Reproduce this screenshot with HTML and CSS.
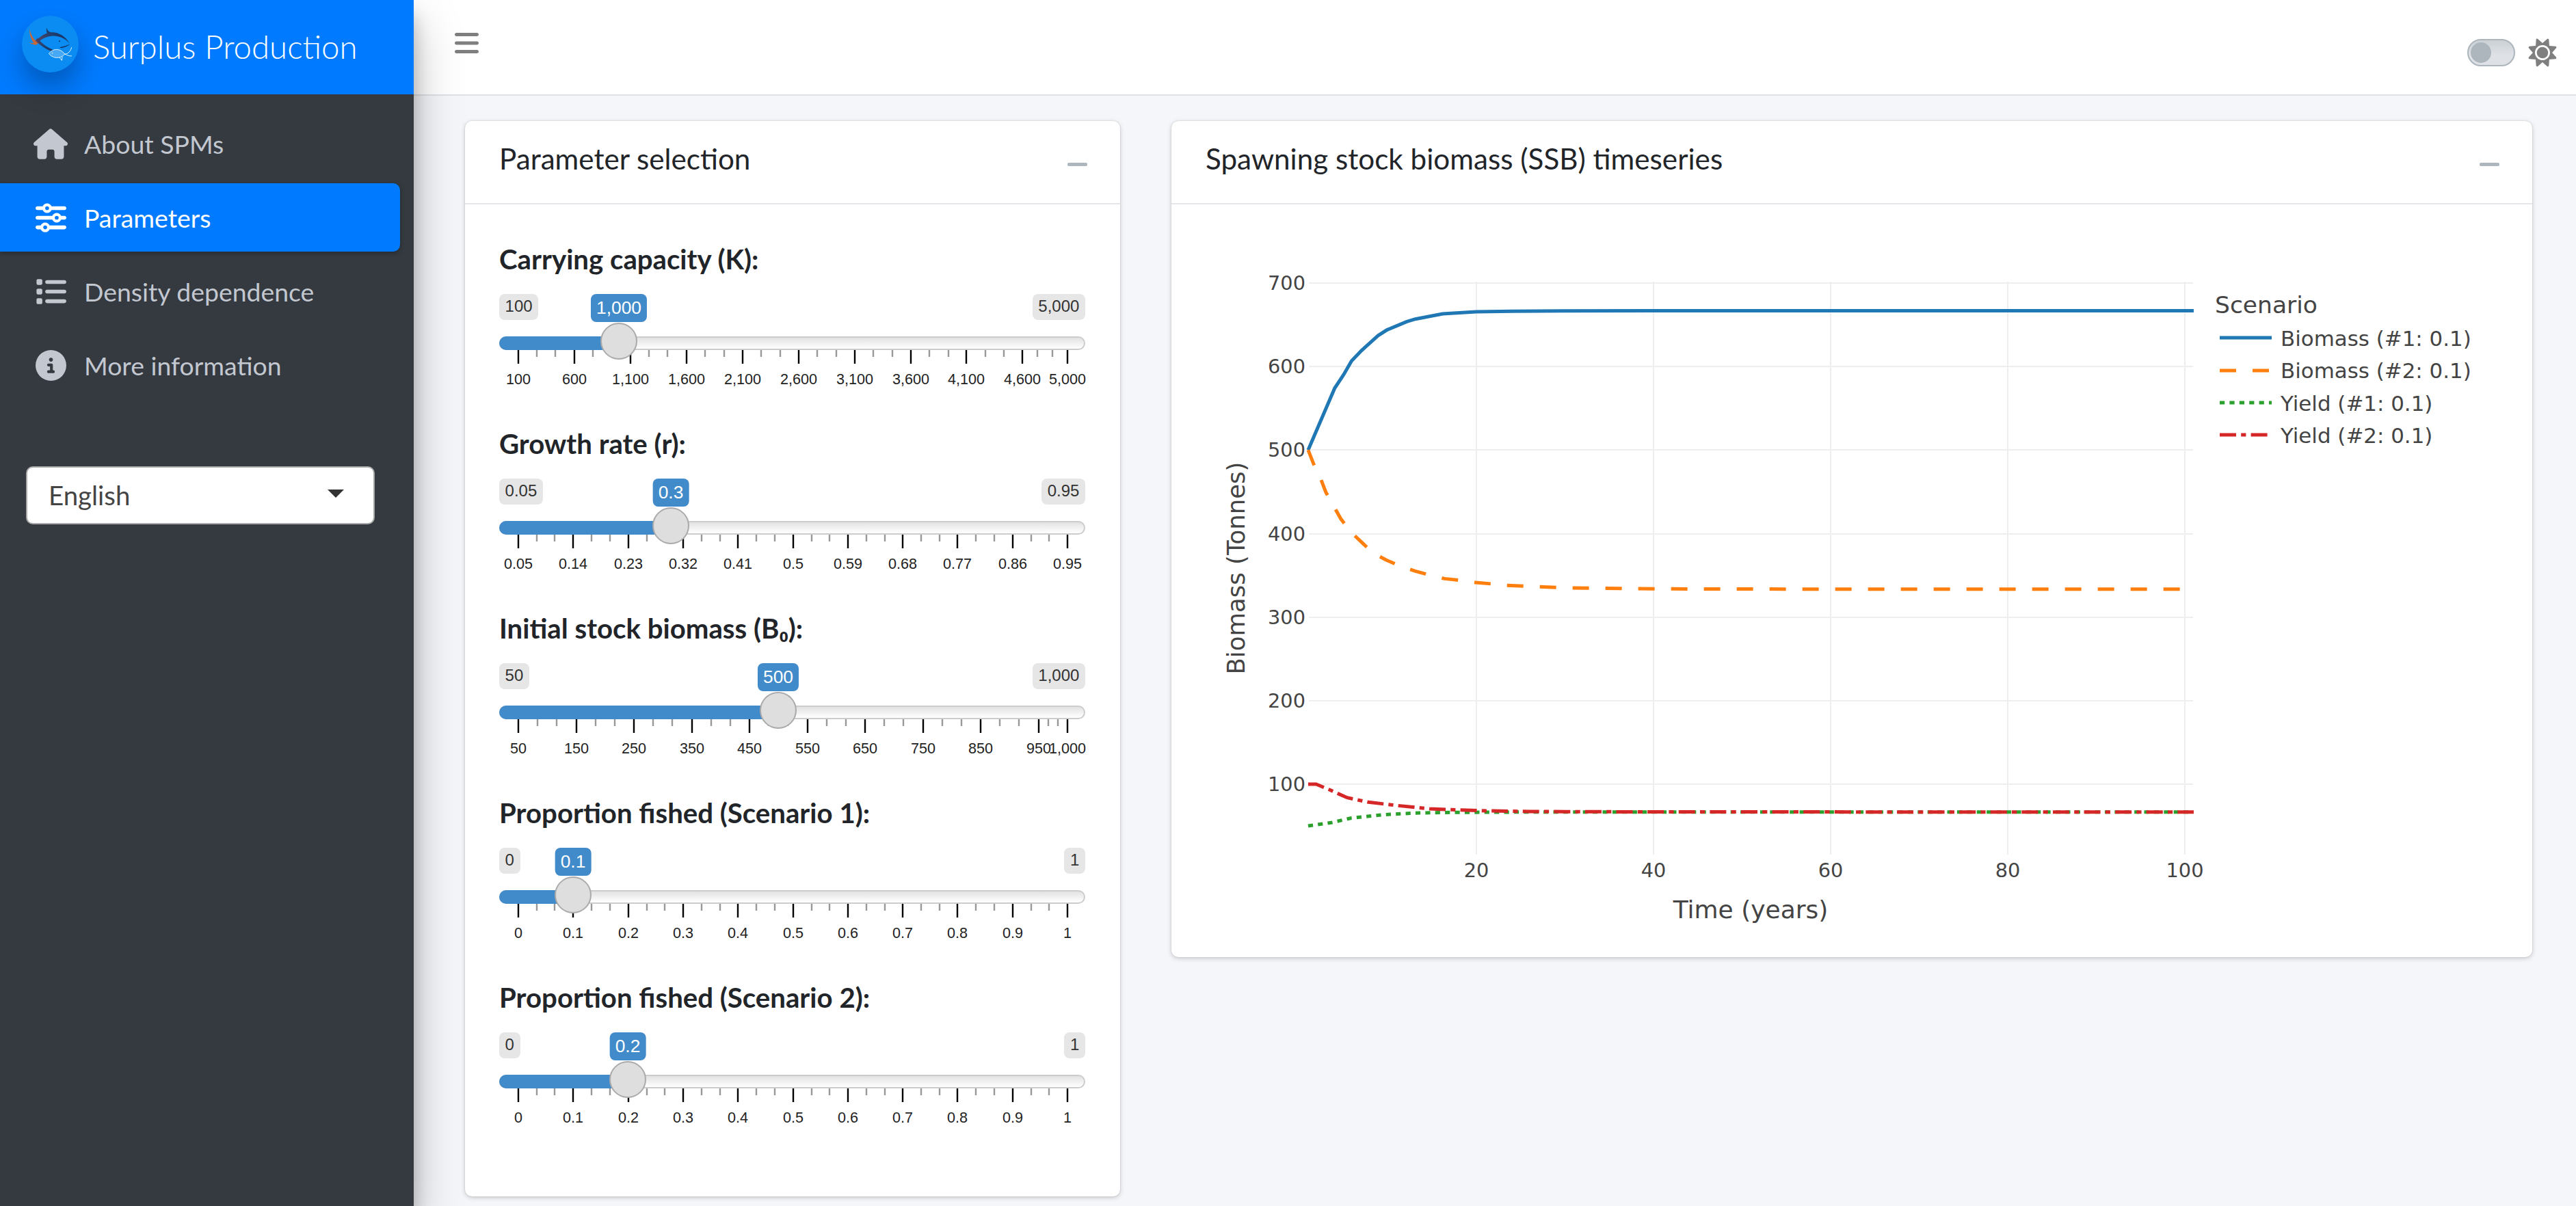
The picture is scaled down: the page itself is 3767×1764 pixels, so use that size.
FILE: index.html
```html
<!DOCTYPE html>
<html lang="en">
<head>
<meta charset="utf-8">
<title>Surplus Production</title>
<link rel="stylesheet" href="styles.css">
</head>
<body>
<div class="app">
  <aside class="sidebar">
    <div class="brand">
      <svg class="logo" viewBox="96 66 250 250">
        <defs>
          <linearGradient id="fishBody" x1="0" y1="0" x2="1" y2="0"><stop offset="0" stop-color="#5a4560"/><stop offset=".5" stop-color="#1f3f70"/><stop offset="1" stop-color="#16305c"/></linearGradient>
        </defs>
        <circle cx="221" cy="191" r="125" fill="#0a8cf2"/>
        <path fill="url(#fishBody)" d="M148 190C175 150 215 135 240 140C270 145 295 165 307 192C295 170 265 155 235 155C205 155 180 170 160 190Z"/>
        <path fill="url(#fishBody)" d="M165 165C185 190 205 205 235 217L225 222C200 212 175 195 155 175Z"/>
        <path fill="#16305c" d="M307 192C300 200 285 205 270 208L262 205C280 202 295 198 307 192Z"/>
        <path fill="#1f3f70" d="M205 118C208 130 215 138 228 140L208 146C203 135 203 125 205 118Z"/>
        <path fill="#c4693c" d="M130 124C135 150 148 170 168 188L155 195C138 175 128 150 130 124Z"/>
        <path fill="#c4693c" d="M126 182C140 188 150 188 165 183L160 195C148 193 135 190 126 182Z"/>
        <circle cx="262" cy="178" r="3" fill="#16305c"/>
        <path fill="#fff" fill-opacity=".25" stroke="#e8f4ff" stroke-width="3" d="M215 233C230 212 262 205 285 235C270 255 235 258 215 233Z"/>
        <path fill="none" stroke="#e8f4ff" stroke-width="3" d="M315 205C312 220 300 235 285 235C298 240 305 245 316 243M262 250L272 263L274 248"/>
        <circle cx="230" cy="231" r="2.5" fill="#e8f4ff"/>
      </svg>
      <span class="brand-text">Surplus Production</span>
    </div>
    <nav class="nav">
      <a class="nav-item">
        <span class="nav-icon"><svg class="icon-home" viewBox="0 0 576 512"><path d="M575.8 255.5c0 18-15 32.1-32 32.1h-32l.7 160.2c0 2.7-.2 5.4-.5 8.1V472c0 22.1-17.9 40-40 40H456c-1.1 0-2.2 0-3.3-.1c-1.4 .1-2.8 .1-4.2 .1H416 392c-22.1 0-40-17.9-40-40V448 384c0-17.7-14.3-32-32-32H256c-17.7 0-32 14.3-32 32v64 24c0 22.1-17.9 40-40 40H160 128.1c-1.5 0-3-.1-4.5-.2c-1.2 .1-2.4 .2-3.6 .2H104c-22.1 0-40-17.9-40-40V360c0-.9 0-1.9 .1-2.8V287.6H32c-18 0-32-14-32-32.1c0-9 3-17 10-24L266.4 8c7-7 15-8 22-8s15 2 21 7L564.8 231.5c8 7 12 15 11 24z"/></svg></span>
        <span>About SPMs</span>
      </a>
      <a class="nav-item is-active">
        <span class="nav-icon"><svg class="icon-std" viewBox="0 0 512 512"><path d="M0 416c0 17.7 14.3 32 32 32l54.7 0c12.3 28.3 40.5 48 73.3 48s61-19.7 73.3-48L480 448c17.7 0 32-14.3 32-32s-14.3-32-32-32l-246.7 0c-12.3-28.3-40.5-48-73.3-48s-61 19.7-73.3 48L32 384c-17.7 0-32 14.3-32 32zm128 0a32 32 0 1 1 64 0 32 32 0 1 1 -64 0zM320 256a32 32 0 1 1 64 0 32 32 0 1 1 -64 0zm32-80c-32.8 0-61 19.7-73.3 48L32 224c-17.7 0-32 14.3-32 32s14.3 32 32 32l246.7 0c12.3 28.3 40.5 48 73.3 48s61-19.7 73.3-48l54.7 0c17.7 0 32-14.3 32-32s-14.3-32-32-32l-54.7 0c-12.3-28.3-40.5-48-73.3-48zM192 128a32 32 0 1 1 0-64 32 32 0 1 1 0 64zm73.3-64C253 35.7 224.8 16 192 16s-61 19.7-73.3 48L32 64C14.3 64 0 78.3 0 96s14.3 32 32 32l86.7 0c12.3 28.3 40.5 48 73.3 48s61-19.7 73.3-48L480 128c17.7 0 32-14.3 32-32s-14.3-32-32-32L265.3 64z"/></svg></span>
        <span>Parameters</span>
      </a>
      <a class="nav-item">
        <span class="nav-icon"><svg class="icon-std" viewBox="0 0 512 512"><path d="M40 48C26.7 48 16 58.7 16 72v48c0 13.3 10.7 24 24 24H88c13.3 0 24-10.7 24-24V72c0-13.3-10.7-24-24-24H40zM192 64c-17.7 0-32 14.3-32 32s14.3 32 32 32H480c17.7 0 32-14.3 32-32s-14.3-32-32-32H192zm0 160c-17.7 0-32 14.3-32 32s14.3 32 32 32H480c17.7 0 32-14.3 32-32s-14.3-32-32-32H192zm0 160c-17.7 0-32 14.3-32 32s14.3 32 32 32H480c17.7 0 32-14.3 32-32s-14.3-32-32-32H192zM16 232v48c0 13.3 10.7 24 24 24H88c13.3 0 24-10.7 24-24V232c0-13.3-10.7-24-24-24H40c-13.3 0-24 10.7-24 24zM40 368c-13.3 0-24 10.7-24 24v48c0 13.3 10.7 24 24 24H88c13.3 0 24-10.7 24-24V392c0-13.3-10.7-24-24-24H40z"/></svg></span>
        <span>Density dependence</span>
      </a>
      <a class="nav-item">
        <span class="nav-icon"><svg class="icon-std" viewBox="0 0 512 512"><path d="M256 512A256 256 0 1 0 256 0a256 256 0 1 0 0 512zM216 336h24V272H216c-13.3 0-24-10.7-24-24s10.7-24 24-24h48c13.3 0 24 10.7 24 24v88h8c13.3 0 24 10.7 24 24s-10.7 24-24 24H216c-13.3 0-24-10.7-24-24s10.7-24 24-24zm40-208a32 32 0 1 1 0 64 32 32 0 1 1 0-64z"/></svg></span>
        <span>More information</span>
      </a>
    </nav>
    <div class="lang-select"><span>English</span><span class="caret"></span></div>
  </aside>

  <div class="main">
    <header class="topbar">
      <svg class="hamburger" viewBox="0 0 448 512"><path d="M0 96C0 78.3 14.3 64 32 64H416c17.7 0 32 14.3 32 32s-14.3 32-32 32H32C14.3 128 0 113.7 0 96zM0 256c0-17.7 14.3-32 32-32H416c17.7 0 32 14.3 32 32s-14.3 32-32 32H32c-17.7 0-32-14.3-32-32zM448 416c0 17.7-14.3 32-32 32H32c-17.7 0-32-14.3-32-32s14.3-32 32-32H416c17.7 0 32 14.3 32 32z"/></svg>
      <div class="top-tools">
        <span class="toggle"><span class="toggle-knob"></span></span>
        <svg class="sun" viewBox="0 0 512 512"><path d="M256 160c-52.9 0-96 43.1-96 96s43.1 96 96 96 96-43.1 96-96-43.1-96-96-96zm246.4 80.5l-94.7-47.3 33.5-100.4c4.5-13.6-8.4-26.5-21.9-21.9l-100.4 33.5-47.4-94.8c-6.4-12.8-24.6-12.8-31 0l-47.3 94.7L92.7 70.8c-13.6-4.5-26.5 8.4-21.9 21.9l33.5 100.4-94.7 47.4c-12.8 6.4-12.8 24.6 0 31l94.7 47.3-33.5 100.5c-4.5 13.6 8.4 26.5 21.9 21.9l100.4-33.5 47.3 94.7c6.4 12.8 24.6 12.8 31 0l47.3-94.7 100.4 33.5c13.6 4.5 26.5-8.4 21.9-21.9l-33.5-100.4 94.7-47.3c13-6.5 13-24.7.2-31.1zm-155.9 106c-49.9 49.9-131.1 49.9-181 0-49.9-49.9-49.9-131.1 0-181 49.9-49.9 131.1-49.9 181 0 49.9 49.9 49.9 131.1 0 181z"/></svg>
      </div>
    </header>

    <main class="content">
      <section class="card card-params">
        <div class="card-header"><h3 class="card-title">Parameter selection</h3><span class="minus"></span></div>
        <div class="card-body">

          <div class="field">
            <label class="field-label">Carrying capacity (K):</label>
            <div class="slider" style="--x:175px">
              <span class="pill pill-min">100</span><span class="pill pill-max">5,000</span>
              <span class="track"></span><span class="fill"></span>
              <svg class="ticks" viewBox="0 0 857 20"><path class="tick-minor" d="M55 0v10M82 0v10M137 0v10M164 0v10M219 0v10M246 0v10M301 0v10M329 0v10M383 0v10M411 0v10M465 0v10M493 0v10M547 0v10M575 0v10M629 0v10M657 0v10M711 0v10M738 0v10M787 0v10M809 0v10"/><path class="tick-major" d="M28 0v20M110 0v20M192 0v20M274 0v20M356 0v20M438 0v20M520 0v20M602 0v20M683 0v20M765 0v20M831 0v20"/></svg>
              <span class="handle"></span><span class="pill pill-from">1,000</span>
              <div class="grid-labels"><span style="left:28px">100</span><span style="left:110px">600</span><span style="left:192px">1,100</span><span style="left:274px">1,600</span><span style="left:356px">2,100</span><span style="left:438px">2,600</span><span style="left:520px">3,100</span><span style="left:602px">3,600</span><span style="left:683px">4,100</span><span style="left:765px">4,600</span><span style="left:831px">5,000</span></div>
            </div>
          </div>

          <div class="field">
            <label class="field-label">Growth rate (r):</label>
            <div class="slider" style="--x:251px">
              <span class="pill pill-min">0.05</span><span class="pill pill-max">0.95</span>
              <span class="track"></span><span class="fill"></span>
              <svg class="ticks" viewBox="0 0 857 20"><path class="tick-minor" d="M55 0v10M81 0v10M135 0v10M162 0v10M216 0v10M242 0v10M296 0v10M323 0v10M376 0v10M403 0v10M457 0v10M483 0v10M537 0v10M564 0v10M617 0v10M644 0v10M697 0v10M724 0v10M778 0v10M804 0v10"/><path class="tick-major" d="M28 0v20M108 0v20M189 0v20M269 0v20M349 0v20M430 0v20M510 0v20M590 0v20M670 0v20M751 0v20M831 0v20"/></svg>
              <span class="handle"></span><span class="pill pill-from">0.3</span>
              <div class="grid-labels"><span style="left:28px">0.05</span><span style="left:108px">0.14</span><span style="left:189px">0.23</span><span style="left:269px">0.32</span><span style="left:349px">0.41</span><span style="left:430px">0.5</span><span style="left:510px">0.59</span><span style="left:590px">0.68</span><span style="left:670px">0.77</span><span style="left:751px">0.86</span><span style="left:831px">0.95</span></div>
            </div>
          </div>

          <div class="field">
            <label class="field-label">Initial stock biomass (B₀):</label>
            <div class="slider" style="--x:408px">
              <span class="pill pill-min">50</span><span class="pill pill-max">1,000</span>
              <span class="track"></span><span class="fill"></span>
              <svg class="ticks" viewBox="0 0 857 20"><path class="tick-minor" d="M56 0v10M84 0v10M141 0v10M169 0v10M225 0v10M253 0v10M310 0v10M338 0v10M394 0v10M422 0v10M479 0v10M507 0v10M563 0v10M591 0v10M648 0v10M676 0v10M732 0v10M760 0v10M803 0v10M817 0v10"/><path class="tick-major" d="M28 0v20M113 0v20M197 0v20M282 0v20M366 0v20M451 0v20M535 0v20M620 0v20M704 0v20M789 0v20M831 0v20"/></svg>
              <span class="handle"></span><span class="pill pill-from">500</span>
              <div class="grid-labels"><span style="left:28px">50</span><span style="left:113px">150</span><span style="left:197px">250</span><span style="left:282px">350</span><span style="left:366px">450</span><span style="left:451px">550</span><span style="left:535px">650</span><span style="left:620px">750</span><span style="left:704px">850</span><span style="left:789px">950</span><span style="left:831px">1,000</span></div>
            </div>
          </div>

          <div class="field">
            <label class="field-label">Proportion fished (Scenario 1):</label>
            <div class="slider" style="--x:108px">
              <span class="pill pill-min">0</span><span class="pill pill-max">1</span>
              <span class="track"></span><span class="fill"></span>
              <svg class="ticks" viewBox="0 0 857 20"><path class="tick-minor" d="M55 0v10M81 0v10M135 0v10M162 0v10M216 0v10M242 0v10M296 0v10M323 0v10M376 0v10M403 0v10M457 0v10M483 0v10M537 0v10M564 0v10M617 0v10M644 0v10M697 0v10M724 0v10M778 0v10M804 0v10"/><path class="tick-major" d="M28 0v20M108 0v20M189 0v20M269 0v20M349 0v20M430 0v20M510 0v20M590 0v20M670 0v20M751 0v20M831 0v20"/></svg>
              <span class="handle"></span><span class="pill pill-from">0.1</span>
              <div class="grid-labels"><span style="left:28px">0</span><span style="left:108px">0.1</span><span style="left:189px">0.2</span><span style="left:269px">0.3</span><span style="left:349px">0.4</span><span style="left:430px">0.5</span><span style="left:510px">0.6</span><span style="left:590px">0.7</span><span style="left:670px">0.8</span><span style="left:751px">0.9</span><span style="left:831px">1</span></div>
            </div>
          </div>

          <div class="field">
            <label class="field-label">Proportion fished (Scenario 2):</label>
            <div class="slider" style="--x:188px">
              <span class="pill pill-min">0</span><span class="pill pill-max">1</span>
              <span class="track"></span><span class="fill"></span>
              <svg class="ticks" viewBox="0 0 857 20"><path class="tick-minor" d="M55 0v10M81 0v10M135 0v10M162 0v10M216 0v10M242 0v10M296 0v10M323 0v10M376 0v10M403 0v10M457 0v10M483 0v10M537 0v10M564 0v10M617 0v10M644 0v10M697 0v10M724 0v10M778 0v10M804 0v10"/><path class="tick-major" d="M28 0v20M108 0v20M189 0v20M269 0v20M349 0v20M430 0v20M510 0v20M590 0v20M670 0v20M751 0v20M831 0v20"/></svg>
              <span class="handle"></span><span class="pill pill-from">0.2</span>
              <div class="grid-labels"><span style="left:28px">0</span><span style="left:108px">0.1</span><span style="left:189px">0.2</span><span style="left:269px">0.3</span><span style="left:349px">0.4</span><span style="left:430px">0.5</span><span style="left:510px">0.6</span><span style="left:590px">0.7</span><span style="left:670px">0.8</span><span style="left:751px">0.9</span><span style="left:831px">1</span></div>
            </div>
          </div>

        </div>
      </section>

      <section class="card card-chart">
        <div class="card-header"><h3 class="card-title">Spawning stock biomass (SSB) timeseries</h3><span class="minus"></span></div>
        <svg class="chart" viewBox="1713 299 1990 1099">
          <g class="grid">
            <path d="M1914 414H3207M1914 536H3207M1914 658H3207M1914 781H3207M1914 903H3207M1914 1025H3207M1914 1147H3207"/>
            <path d="M2159 412V1250M2418 412V1250M2677 412V1250M2936 412V1250M3195 412V1250"/>
          </g>
          <g transform="matrix(12.95 0 0 -1.222 1900 1269.2)">
            <polyline class="line line-blue" points="1,500 4,574 5,590 5.9,606.6 7,618.8 8.9,637 9.9,643.7 12.1,653.5 13.1,656.7 16.2,663 20,665.4 24,666 30,666.5 40,666.65 60,666.67 101,666.67"/>
            <polyline class="line line-orange" points="1,500 1.6,483.7 2.4,466 3,449.5 3.9,432.5 4.7,417.5 5.8,402 7,390 8.3,377 9.8,368.4 11.4,361 13.1,355 14.8,350 16.4,346 18.2,343.9 19.9,341.4 21.7,339.8 23.2,338 30,335 40,333.8 60,333.4 101,333.33"/>
            <polyline class="line line-green" points="1,50 3.6,53.9 5.8,59.3 9.4,63.4 12.9,65.4 17.3,66.2 25,66.6 40,66.67 101,66.67"/>
            <polyline class="line line-red" points="1,100 1.9,100 3.4,93.4 5.4,83.9 7.8,78.5 11.1,74.4 14.7,70.5 18.2,69.2 21.7,68 26,67.3 40,66.8 101,66.67"/>
          </g>
          <g class="axis-ticks axis-y">
            <text x="1909" y="424">700</text><text x="1909" y="546">600</text><text x="1909" y="668">500</text><text x="1909" y="791">400</text><text x="1909" y="913">300</text><text x="1909" y="1035">200</text><text x="1909" y="1157">100</text>
          </g>
          <g class="axis-ticks axis-x">
            <text x="2159" y="1283">20</text><text x="2418" y="1283">40</text><text x="2677" y="1283">60</text><text x="2936" y="1283">80</text><text x="3195" y="1283">100</text>
          </g>
          <text class="axis-title axis-title-x" x="2560" y="1343">Time (years)</text>
          <text class="axis-title" transform="translate(1820 831) rotate(-90)">Biomass (Tonnes)</text>
          <text class="legend-title" x="3239" y="458">Scenario</text>
          <g class="legend">
            <path class="line line-blue" d="M3246 494H3322"/>
            <path class="line line-orange" d="M3246 542H3322"/>
            <path class="line line-green" d="M3246 589H3322"/>
            <path class="line line-red" d="M3246 636H3322"/>
            <text x="3335" y="506">Biomass (#1: 0.1)</text>
            <text x="3335" y="553">Biomass (#2: 0.1)</text>
            <text x="3335" y="601">Yield (#1: 0.1)</text>
            <text x="3335" y="648">Yield (#2: 0.1)</text>
          </g>
        </svg>
      </section>
    </main>
  </div>
</div>
</body>
</html>
```
FILE: styles.css
```css
* { box-sizing: border-box; }
html, body { margin: 0; height: 100%; }
body {
  font-family: "Lato", "Noto Sans", sans-serif;
  font-size: 38.4px;
  color: #212529;
  background: #f4f6f9;
  overflow: hidden;
}
.app { display: flex; height: 1764px; }

/* Sidebar */
.sidebar {
  width: 605px;
  flex: none;
  background: #343a40;
  position: relative;
  z-index: 2;
  box-shadow: 0 34px 67px rgba(0,0,0,.25), 0 24px 24px rgba(0,0,0,.22);
}
.brand {
  height: 138px;
  background: #007bff;
  display: flex;
  align-items: center;
  padding-left: 32px;
  gap: 21px;
}
.logo {
  width: 83px;
  height: 83px;
  border-radius: 50%;
  margin-top: -10px;
  box-shadow: 0 22px 40px rgba(0,0,0,.28);
  flex: none;
}
.brand-text { font-size: 47.4px; font-weight: 300; color: #fff; margin-top: -4px; white-space: nowrap; }
.nav { padding-top: 22px; width: 585px; display: flex; flex-direction: column; gap: 8px; font-size: 37.4px; }
.nav-item {
  height: 100px;
  display: flex;
  align-items: center;
  gap: 24px;
  padding-left: 49px;
  color: #c2c7d0;
  fill: #c2c7d0;
  border-radius: 0 10px 10px 0;
}
.nav-item.is-active {
  background: #007bff;
  color: #fff;
  fill: #fff;
  box-shadow: 0 2px 7px rgba(0,0,0,.3);
}
.nav-icon { width: 50px; display: flex; justify-content: center; flex: none; }
.icon-home { width: 50px; height: 45px; }
.icon-std { width: 45px; height: 45px; }
.lang-select {
  margin: 98px 0 0 38px;
  width: 510px;
  height: 85px;
  background: #fff;
  border: 2.4px solid #aaa;
  border-radius: 10px;
  display: flex;
  align-items: center;
  justify-content: space-between;
  padding: 0 43px 2px 31px;
  color: #444;
}
.caret {
  width: 0;
  height: 0;
  border-left: 12.5px solid transparent;
  border-right: 12.5px solid transparent;
  border-top: 12px solid #333;
  margin-top: -4px;
}

/* Main */
.main { flex: 1; display: flex; flex-direction: column; min-width: 0; }
.topbar {
  height: 140px;
  background: #fff;
  border-bottom: 2px solid #dee2e6;
  display: flex;
  align-items: center;
  justify-content: space-between;
  padding: 0 27px 0 60px;
  flex: none;
}
.hamburger { width: 35px; height: 40px; fill: #7f7f7f; margin-top: -12px; }
.top-tools { display: flex; align-items: center; gap: 18px; margin-top: 16px; }
.toggle {
  width: 70px;
  height: 40px;
  border-radius: 20px;
  border: 2.4px solid #adb5bd;
  background: linear-gradient(#cbd0d5, #dee2e6 60%);
  display: flex;
  align-items: center;
  padding-left: 3px;
}
.toggle-knob { width: 30px; height: 30px; border-radius: 50%; background: #adb5bd; }
.sun { width: 44px; height: 44px; fill: #7f7f7f; transform: rotate(22.5deg); }

.content {
  flex: 1;
  display: flex;
  align-items: flex-start;
  gap: 75px;
  padding: 37px 64px 0 75px;
}
.card {
  background: #fff;
  border-radius: 10px;
  box-shadow: 0 0 2px rgba(0,0,0,.18), 0 2px 7px rgba(0,0,0,.18);
}
.card-params { width: 958px; height: 1573px; flex: none; }
.card-chart { flex: 1; height: 1223px; }
.card-header {
  height: 122px;
  border-bottom: 2px solid #e4e6e9;
  display: flex;
  align-items: center;
  justify-content: space-between;
  padding: 0 48px 0 50px;
}
.card-title { margin: -12px 0 0; font-size: 42.2px; font-weight: 400; color: #212529; }
.minus { width: 29px; height: 5px; border-radius: 2px; background: #adb5bd; margin-top: 6px; }
.card-body { padding: 54px 51px 0 50px; }

/* Slider */
.field { height: 270px; }
.field-label { display: block; height: 58px; line-height: 52px; font-size: 40.2px; font-weight: 700; margin-bottom: 19px; }
.slider { position: relative; height: 193px; font-family: "Liberation Sans", Arial, sans-serif; }
.pill {
  position: absolute;
  top: 0;
  height: 38px;
  line-height: 36px;
  padding: 0 8.6px;
  font-size: 24px;
  color: #333;
  background: #e6e6e6;
  border-radius: 8px;
}
.pill-min { left: 0; }
.pill-max { right: 0; }
.pill-from {
  left: var(--x);
  transform: translateX(-50%);
  height: 41px;
  line-height: 40px;
  font-size: 26.4px;
  padding: 0 8px;
  color: #fff;
  background: #428bca;
}
.track {
  position: absolute;
  top: 62px;
  left: 0;
  right: 0;
  height: 20px;
  border: 2.4px solid #ccc;
  border-radius: 10px;
  background: linear-gradient(#e2e2e2, #fff);
}
.fill {
  position: absolute;
  top: 62px;
  left: 0;
  width: var(--x);
  height: 20px;
  border-radius: 10px 0 0 10px;
  background: #428bca;
}
.ticks { position: absolute; top: 82px; left: 0; width: 857px; height: 20px; }
.tick-major { stroke: #000; stroke-width: 2.4; fill: none; }
.tick-minor { stroke: #999; stroke-width: 2.4; fill: none; }
.handle {
  position: absolute;
  top: 42px;
  left: calc(var(--x) - 27px);
  width: 54px;
  height: 54px;
  border-radius: 50%;
  background: #dedede;
  border: 2.4px solid #aaa;
}
.grid-labels span {
  position: absolute;
  top: 112px;
  transform: translateX(-50%);
  font-size: 21.6px;
  line-height: 26px;
  color: #222;
  white-space: nowrap;
}

/* Chart */
.chart { display: block; width: 1990px; height: 1099px; font-family: "DejaVu Sans", Verdana, sans-serif; fill: #444; }
.grid path { stroke: #eee; stroke-width: 2; fill: none; }
.line { fill: none; stroke-width: 5; vector-effect: non-scaling-stroke; }
.line-blue { stroke: #1f77b4; }
.line-orange { stroke: #ff7f0e; stroke-dasharray: 24 24; }
.line-green { stroke: #2ca02c; stroke-dasharray: 7.2 7.2; }
.line-red { stroke: #d62728; stroke-dasharray: 24 7.2 7.2 7.2; }
.axis-ticks { font-size: 28.8px; }
.axis-y { text-anchor: end; }
.axis-x { text-anchor: middle; }
.axis-title { font-size: 35.5px; text-anchor: middle; }
.axis-title-x { font-size: 36px; }
.legend-title { font-size: 34.5px; }
.legend { font-size: 30.9px; }
```
